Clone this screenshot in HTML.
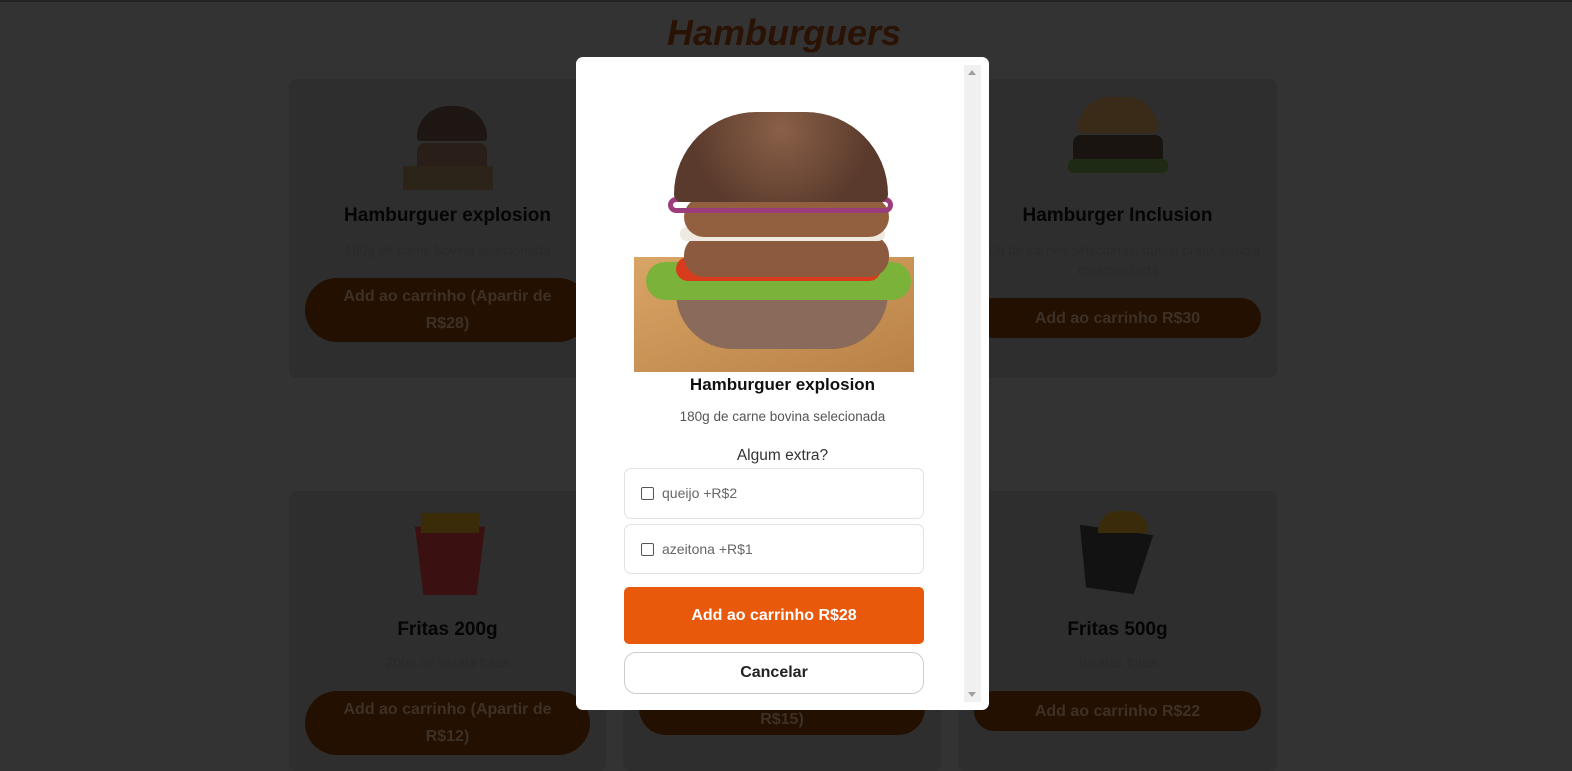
<!DOCTYPE html>
<html><head><meta charset="utf-8"><style>
*{box-sizing:border-box;margin:0;padding:0}
body{width:1572px;height:763px;overflow:hidden;background:#333;font-family:"Liberation Sans",sans-serif;position:relative}
.top{position:absolute;left:0;top:0;width:1572px;height:2px;background:#222}
h1{position:absolute;left:0;width:1568px;top:12px;text-align:center;font-style:italic;font-size:36px;font-weight:bold;color:#2a1204}
.card{position:absolute;background:#2e2e2e;border-radius:8px;text-align:center}
.card h2{position:absolute;left:0;right:0;font-size:19px;color:#050505;font-weight:bold}
.card p{position:absolute;left:0;right:0;font-size:13.5px;color:#2a2a2a;line-height:20px;padding:0 15px}
.card .b{position:absolute;left:16px;right:16px;background:#241000;border-radius:32px;color:#3d3026;font-weight:bold;font-size:16px;line-height:27px;display:flex;align-items:center;justify-content:center;padding:0 30px}
.modal{position:absolute;left:576px;top:57px;width:413px;height:653px;background:#fff;border-radius:7px;overflow:hidden}
.sb{position:absolute;left:388px;top:8px;width:17px;height:637px;background:#f0f0f0}
.opt{position:absolute;left:48px;width:300px;border:1px solid #e2e2e2;border-radius:7px;font-size:14px;color:#666}
.cb{position:absolute;left:16px;width:13px;height:13px;border:1.5px solid #555;border-radius:2px}
</style></head><body>
<div class="top"></div>
<h1>Hamburguers</h1>

<div class="card" style="left:289px;top:79px;width:317px;height:299px">
 <div style="position:absolute;left:114px;top:27px;width:90px;height:84px">
  <div style="position:absolute;left:14px;top:0;width:70px;height:35px;background:#1e1612;border-radius:35px 35px 4px 4px"></div>
  <div style="position:absolute;left:14px;top:37px;width:70px;height:30px;background:#2a1f18;border-radius:8px"></div>
  <div style="position:absolute;left:0;top:60px;width:90px;height:24px;background:#2c2419"></div></div>
 <h2 style="top:126px">Hamburguer explosion</h2>
 <p style="top:162px">180g de carne bovina selecionada</p>
 <div class="b" style="top:199px;height:64px">Add ao carrinho (Apartir de R$28)</div>
</div>
<div class="card" style="left:623px;top:79px;width:318px;height:299px"></div>
<div class="card" style="left:958px;top:79px;width:319px;height:299px">
 <div style="position:absolute;left:110px;top:18px;width:100px;height:88px">
  <div style="position:absolute;left:10px;top:0;width:80px;height:36px;background:#3a2a18;border-radius:40px 40px 5px 5px"></div>
  <div style="position:absolute;left:5px;top:38px;width:90px;height:30px;background:#1a1410;border-radius:8px"></div>
  <div style="position:absolute;left:0;top:62px;width:100px;height:14px;background:#1f2a14;border-radius:6px"></div></div>
 <h2 style="top:126px">Hamburger Inclusion</h2>
 <p style="top:162px">180g de carnes selecionas, queijo prato, cebola caramelizada</p>
 <div class="b" style="top:219px;height:40px">Add ao carrinho R$30</div>
</div>

<div class="card" style="left:289px;top:491px;width:317px;height:280px">
 <div style="position:absolute;left:126px;top:28px;width:70px;height:76px;background:#3a1010;clip-path:polygon(0 10%,100% 10%,88% 100%,12% 100%)"></div>
 <div style="position:absolute;left:132px;top:22px;width:58px;height:20px;background:#3a2c08"></div>
 <h2 style="top:128px">Fritas 200g</h2>
 <p style="top:162px">200g de batata fritas</p>
 <div class="b" style="top:200px;height:64px">Add ao carrinho (Apartir de R$12)</div>
</div>
<div class="card" style="left:623px;top:491px;width:318px;height:280px">
 <div class="b" style="top:190px;height:54px;padding-top:22px">R$15)</div>
</div>
<div class="card" style="left:958px;top:491px;width:319px;height:280px">
 <div style="position:absolute;left:118px;top:28px;width:74px;height:72px;background:#121212;clip-path:polygon(0 15%,100% 15%,85% 100%,20% 100%);transform:rotate(8deg)"></div>
 <div style="position:absolute;left:140px;top:20px;width:50px;height:22px;background:#3a2c0a;border-radius:20px 20px 0 0"></div>
 <h2 style="top:128px">Fritas 500g</h2>
 <p style="top:162px">batatas fritas</p>
 <div class="b" style="top:200px;height:40px">Add ao carrinho R$22</div>
</div>

<div class="modal">
 <div class="sb"><div style="position:absolute;left:4px;top:5px;border:4px solid transparent;border-bottom:5px solid #a0a0a0;border-top:0"></div><div style="position:absolute;left:4px;bottom:5px;border:4px solid transparent;border-top:5px solid #a0a0a0;border-bottom:0"></div></div>
 <div style="position:absolute;left:58px;top:200px;width:280px;height:115px;background:linear-gradient(160deg,#d9a566,#b98146);"></div>
 <div style="position:absolute;left:100px;top:226px;width:212px;height:66px;background:#8a6a5a;border-radius:10px 10px 60px 60px"></div>
 <div style="position:absolute;left:70px;top:205px;width:265px;height:38px;background:#7bb33a;border-radius:20px"></div>
 <div style="position:absolute;left:100px;top:200px;width:205px;height:24px;background:#d83c1c;border-radius:12px"></div>
 <div style="position:absolute;left:108px;top:178px;width:205px;height:42px;background:#8c5a3e;border-radius:20px"></div>
 <div style="position:absolute;left:104px;top:170px;width:205px;height:14px;background:#eeeae0;border-radius:7px"></div>
 <div style="position:absolute;left:108px;top:140px;width:205px;height:40px;background:#93603f;border-radius:20px"></div>
 <div style="position:absolute;left:92px;top:140px;width:225px;height:16px;border:5px solid #9a3d7a;border-radius:10px"></div>
 <div style="position:absolute;left:98px;top:55px;width:214px;height:90px;background:radial-gradient(circle at 50% 20%,#8a6048,#5a3a2c 70%);border-radius:107px 107px 10px 10px"></div>
 <div style="position:absolute;left:0;right:0;top:318px;text-align:center;font-weight:bold;font-size:17px;color:#111">Hamburguer explosion</div>
 <div style="position:absolute;left:0;right:0;top:352px;text-align:center;font-size:13.5px;color:#555">180g de carne bovina selecionada</div>
 <div style="position:absolute;left:0;right:0;top:390px;text-align:center;font-size:15.5px;color:#333">Algum extra?</div>
 <div class="opt" style="top:411px;height:51px"><div class="cb" style="top:18px"></div><span style="position:absolute;left:37px;top:16px">queijo +R$2</span></div>
 <div class="opt" style="top:467px;height:50px"><div class="cb" style="top:18px"></div><span style="position:absolute;left:37px;top:16px">azeitona +R$1</span></div>
 <div style="position:absolute;left:48px;top:530px;width:300px;height:57px;background:#e8590c;border-radius:5px;color:#fff;font-weight:bold;font-size:16px;line-height:57px;text-align:center">Add ao carrinho R$28</div>
 <div style="position:absolute;left:48px;top:595px;width:300px;height:42px;border:1px solid #ccc;border-radius:12px;color:#222;font-weight:bold;font-size:16px;line-height:40px;text-align:center">Cancelar</div>
</div>
</body></html>
